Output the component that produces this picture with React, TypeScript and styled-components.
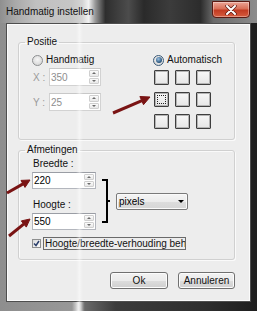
import React from "react"
import styled, { createGlobalStyle, css } from "styled-components"

const GlobalStyle = createGlobalStyle`
  html, body {
    margin: 0;
    padding: 0;
    background: #7a7a7a;
  }
  body {
    font-family: "Liberation Sans", Arial, sans-serif;
    font-size: 10px;
    color: #000;
  }
`

const Window = styled.div`
  position: relative;
  width: 257px;
  height: 311px;
  display: flex;
  flex-direction: column;
  overflow: hidden;
  background: linear-gradient(
    to right,
    #8e8e8e 0%,
    #989898 28%,
    #e8e8e8 30.5%,
    #6a6a6a 33%,
    #3c3c3c 45%,
    #2e2e2e 80%,
    #1e1e1e 100%
  );
`

const TitleBar = styled.div`
  height: 23px;
  flex: none;
  display: flex;
  align-items: flex-start;
  justify-content: space-between;
  background: linear-gradient(
    to right,
    #8f8f8f 0%,
    #a9a9a9 6%,
    #c0c0c0 14%,
    #c6c6c6 28%,
    #d4d4d4 32%,
    #f2f2f2 34.5%,
    #9a9a9a 37%,
    #2e2e2e 41%,
    #4c4c4c 50%,
    #2a2a2a 56%,
    #3c3c3c 66%,
    #2c2c2c 78%,
    #6a6a6a 83%,
    #8c8c8c 100%
  );
`

const Title = styled.div`
  padding: 6px 0 0 6px;
  font-size: 10px;
  line-height: 12px;
  color: #111;
`

const CloseButton = styled.div`
  width: 38px;
  height: 17px;
  margin: 1px 7px 0 0;
  box-sizing: border-box;
  border: 1px solid #5a1a12;
  border-radius: 0 0 4px 4px;
  background: linear-gradient(#eba596 0%, #d97058 45%, #c23b22 55%, #d65c3e 100%);
  box-shadow: inset 0 0 0 1px rgba(255, 255, 255, 0.35);
  display: flex;
  align-items: center;
  justify-content: center;
`

const Client = styled.div`
  flex: 1;
  margin: 0 6px 9px;
  box-sizing: border-box;
  border: 1px solid #4e4e4e;
  box-shadow: inset 0 0 0 1px #fbfbfb;
  background: #ededed;
  padding: 12px 15px 0 11px;
  display: flex;
  flex-direction: column;
`

const GroupBox = styled.fieldset<{ $top?: number }>`
  margin: ${(p) => p.$top || 0}px 0 0;
  min-width: 0;
  border: 1px solid #d0d0d0;
  border-radius: 3px;
  box-shadow: 1px 1px 0 #fafafa, inset 1px 1px 0 #fafafa;
  padding: ${(p) => (p.$top ? "2px 12px 9px 13px" : "6px 12px 10px 13px")};
`

const Legend = styled.legend`
  padding: 0 2px;
  margin-left: -7px;
  font-size: 10px;
  line-height: 12px;
  color: #111;
`

const PositionGrid = styled.div`
  display: grid;
  grid-template-columns: 121px 1fr;
`

const Column = styled.div`
  display: flex;
  flex-direction: column;
`

const RadioRow = styled.label`
  display: flex;
  align-items: center;
  gap: 3px;
  height: 12px;
  line-height: 12px;
  color: #111;
`

const Radio = styled.span<{ $checked?: boolean }>`
  width: 11px;
  height: 11px;
  box-sizing: border-box;
  border-radius: 50%;
  border: 1px solid #8c8e90;
  background: radial-gradient(circle at 50% 40%, #f6f6f6, #cfcfcf);
  display: inline-flex;
  align-items: center;
  justify-content: center;
  ${(p) =>
    p.$checked &&
    css`
      border-color: #3a5a78;
      &::after {
        content: "";
        width: 6px;
        height: 6px;
        border-radius: 50%;
        background: radial-gradient(circle at 40% 35%, #9cc2e4, #1d4a72 75%);
      }
    `}
`

const FieldRow = styled.div<{ $top: number }>`
  display: flex;
  align-items: center;
  margin-top: ${(p) => p.$top}px;
  padding-left: 1px;
`

const AxisLabel = styled.span`
  width: 16px;
  color: #9a9a9a;
`

const SpinBox = styled.div<{ $width: number; $height: number; $disabled?: boolean }>`
  width: ${(p) => p.$width}px;
  height: ${(p) => p.$height}px;
  box-sizing: border-box;
  display: flex;
  border: 1px solid ${(p) => (p.$disabled ? "#d2d2d2" : "#b3b6bd")};
  border-top-color: ${(p) => (p.$disabled ? "#c8c8c8" : "#9a9da4")};
  background: #fff;
`

const SpinValue = styled.span<{ $disabled?: boolean }>`
  flex: 1;
  padding-left: 1px;
  display: flex;
  align-items: center;
  color: ${(p) => (p.$disabled ? "#8e8e8e" : "#000")};
`

const SpinButtons = styled.div`
  width: 10px;
  display: flex;
  flex-direction: column;
  gap: 1px;
  padding: 1px 1px 1px 0;
`

const SpinButton = styled.div`
  flex: 1;
  box-sizing: border-box;
  border: 1px solid #cfcfcf;
  border-radius: 1px;
  background: linear-gradient(#fbfbfb, #e8e8e8);
  display: flex;
  align-items: center;
  justify-content: center;
`

const Tri = styled.span<{ $down?: boolean }>`
  width: 0;
  height: 0;
  border-left: 2px solid transparent;
  border-right: 2px solid transparent;
  ${(p) =>
    p.$down
      ? css`border-top: 2px solid #6b6b6b;`
      : css`border-bottom: 2px solid #6b6b6b;`}
`

const CellGrid = styled.div`
  display: grid;
  grid-template-columns: repeat(3, 15px);
  column-gap: 6px;
  row-gap: 7px;
  margin: 4px 0 0 1px;
`

const Cell = styled.div<{ $focus?: boolean }>`
  position: relative;
  width: 15px;
  height: 15px;
  box-sizing: border-box;
  border: 1px solid #3e3e3e;
  border-radius: 1px;
  background: linear-gradient(#f7f7f7, #e6e6e6);
  box-shadow: inset 0 0 0 1px #b4b4b4;
  ${(p) =>
    p.$focus &&
    css`
      &::after {
        content: "";
        position: absolute;
        inset: 2px;
        border: 1px dotted #222;
      }
    `}
`

const SizeGrid = styled.div`
  display: grid;
  grid-template-columns: 64px auto auto;
  justify-content: start;
`

const SizeLabel = styled.div<{ $top?: number }>`
  grid-column: 1;
  line-height: 12px;
  margin: ${(p) => p.$top || 0}px 0 2px 1px;
  color: #111;
`

const SizeField = styled.div`
  grid-column: 1;
`

const Bracket = styled.div`
  grid-column: 2;
  grid-row: 2 / span 3;
  position: relative;
  width: 4px;
  margin: 7px 0 7px 6px;
  border: 2px solid #000;
  border-left: none;

  &::after {
    content: "";
    position: absolute;
    left: 4px;
    top: 50%;
    width: 4px;
    height: 2px;
    margin-top: -1px;
    background: #000;
  }
`

const Select = styled.div`
  grid-column: 3;
  grid-row: 2 / span 3;
  align-self: center;
  width: 72px;
  height: 17px;
  margin-left: 8px;
  box-sizing: border-box;
  border: 1px solid #7a7a7a;
  border-radius: 2px;
  background: linear-gradient(#f5f5f5 0%, #ececec 50%, #dddddd 51%, #d6d6d6 100%);
  box-shadow: inset 0 0 0 1px #fafafa;
  display: flex;
  align-items: center;
  justify-content: space-between;
  padding: 0 3px 0 2px;
`

const SelectArrow = styled.span`
  width: 0;
  height: 0;
  border-left: 3px solid transparent;
  border-right: 3px solid transparent;
  border-top: 3px solid #000;
`

const CheckRow = styled.div`
  display: flex;
  align-items: center;
  gap: 2px;
  margin-top: 7px;
  height: 13px;
`

const CheckBox = styled.span`
  width: 9px;
  height: 9px;
  box-sizing: border-box;
  border: 1px solid #8e8f8f;
  background: linear-gradient(135deg, #dcdcdc, #fbfbfb);
  display: inline-flex;
  align-items: center;
  justify-content: center;
`

const CheckText = styled.span`
  width: 143px;
  height: 13px;
  box-sizing: border-box;
  border: 1px solid #6a6a6a;
  padding-left: 1px;
  line-height: 11px;
  white-space: nowrap;
  overflow: hidden;
  color: #111;
`

const ButtonRow = styled.div`
  display: flex;
  justify-content: flex-end;
  gap: 10px;
  margin-top: 12px;
`

const Button = styled.div<{ $width: number }>`
  width: ${(p) => p.$width}px;
  height: 17px;
  box-sizing: border-box;
  border: 1px solid #707070;
  border-radius: 3px;
  background: linear-gradient(#f2f2f2 0%, #ebebeb 50%, #dddddd 51%, #cfcfcf 100%);
  box-shadow: inset 0 0 0 1px #fcfcfc;
  display: flex;
  align-items: center;
  justify-content: center;
  color: #111;
`

const GlassStripe = styled.div`
  position: absolute;
  top: 23px;
  bottom: 0;
  left: 76px;
  width: 7px;
  background: linear-gradient(
    to right,
    rgba(255, 255, 255, 0),
    rgba(255, 255, 255, 0.45),
    rgba(255, 255, 255, 0)
  );
  pointer-events: none;
`

const Annotations = styled.svg`
  position: absolute;
  left: 0;
  top: 0;
  pointer-events: none;
`

const Spin = ({ value, width, height, disabled }: { value: string; width: number; height: number; disabled?: boolean }) => (
  <SpinBox $width={width} $height={height} $disabled={disabled}>
    <SpinValue $disabled={disabled}>{value}</SpinValue>
    <SpinButtons>
      <SpinButton>
        <Tri />
      </SpinButton>
      <SpinButton>
        <Tri $down />
      </SpinButton>
    </SpinButtons>
  </SpinBox>
)

const arrows = [
  { line: "113,113 142,100.6", head: "150,97 143.5,104.7 139.9,96.5" },
  { line: "7,193 23.5,183.6", head: "30,180 25,187.4 21,180.4" },
  { line: "9,236 24,223.9", head: "30,219 26.3,227.1 21.3,220.9" },
]

export default function App() {
  return (
    <>
      <GlobalStyle />
      <Window>
        <TitleBar>
          <Title>Handmatig instellen</Title>
          <CloseButton>
            <svg width="12" height="10" viewBox="0 0 12 10">
              <path d="M2 1 L10 9 M10 1 L2 9" stroke="#5a1a12" strokeWidth="3.4" strokeLinecap="round" />
              <path d="M2 1 L10 9 M10 1 L2 9" stroke="#fff" strokeWidth="2" strokeLinecap="round" />
            </svg>
          </CloseButton>
        </TitleBar>
        <Client>
          <GroupBox>
            <Legend>Positie</Legend>
            <PositionGrid>
              <Column>
                <RadioRow>
                  <Radio />
                  Handmatig
                </RadioRow>
                <FieldRow $top={2}>
                  <AxisLabel>X :</AxisLabel>
                  <Spin value="350" width={52} height={18} disabled />
                </FieldRow>
                <FieldRow $top={7}>
                  <AxisLabel>Y :</AxisLabel>
                  <Spin value="25" width={52} height={18} disabled />
                </FieldRow>
              </Column>
              <Column>
                <RadioRow>
                  <Radio $checked />
                  Automatisch
                </RadioRow>
                <CellGrid>
                  {Array.from({ length: 9 }, (_, i) => (
                    <Cell key={i} $focus={i === 3} />
                  ))}
                </CellGrid>
              </Column>
            </PositionGrid>
          </GroupBox>

          <GroupBox $top={4}>
            <Legend>Afmetingen</Legend>
            <SizeGrid>
              <SizeLabel>Breedte :</SizeLabel>
              <SizeField>
                <Spin value="220" width={64} height={17} />
              </SizeField>
              <SizeLabel $top={10}>Hoogte :</SizeLabel>
              <SizeField>
                <Spin value="550" width={64} height={17} />
              </SizeField>
              <Bracket />
              <Select>
                pixels
                <SelectArrow />
              </Select>
            </SizeGrid>
            <CheckRow>
              <CheckBox>
                <svg width="7" height="7" viewBox="0 0 7 7">
                  <path d="M1 3.5 L3 5.5 L6 1" fill="none" stroke="#2b3f6c" strokeWidth="1.5" />
                </svg>
              </CheckBox>
              <CheckText>Hoogte/breedte-verhouding behouden</CheckText>
            </CheckRow>
          </GroupBox>

          <ButtonRow>
            <Button $width={58}>Ok</Button>
            <Button $width={57}>Annuleren</Button>
          </ButtonRow>
        </Client>
        <GlassStripe />
        <Annotations width="257" height="311" viewBox="0 0 257 311">
          {arrows.map((a, i) => (
            <g key={i} fill="#7a1414" stroke="#7a1414">
              <polyline points={a.line} strokeWidth="3" fill="none" />
              <polygon points={a.head} strokeWidth="1" strokeLinejoin="round" />
            </g>
          ))}
        </Annotations>
      </Window>
    </>
  )
}
